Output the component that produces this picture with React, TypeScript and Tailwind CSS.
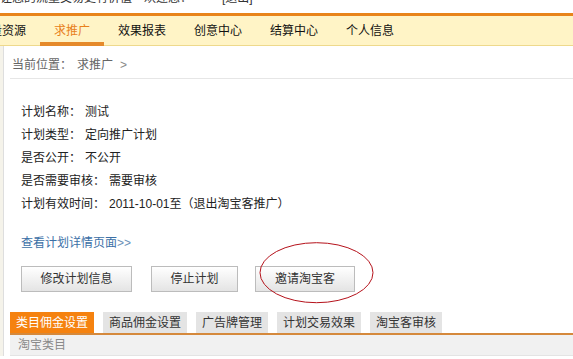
import React from 'react';

const navItems = ['流量资源', '求推广', '效果报表', '创意中心', '结算中心', '个人信息'];

const planInfo = [
  { label: '计划名称：', value: '测试' },
  { label: '计划类型：', value: '定向推广计划' },
  { label: '是否公开：', value: '不公开' },
  { label: '是否需要审核：', value: '需要审核' },
  { label: '计划有效时间：', value: '2011-10-01至（退出淘宝客推广）' },
];

const tabs = [
  { name: '类目佣金设置', active: true },
  { name: '商品佣金设置', active: false },
  { name: '广告牌管理', active: false },
  { name: '计划交易效果', active: false },
  { name: '淘宝客审核', active: false },
];

const App = () => {
  return (
    <div className="relative h-[359px] w-full overflow-hidden bg-white text-[12px] text-[#222] font-['Liberation_Sans','Noto_Sans_CJK_SC',sans-serif]">
      {/* top strip, cut off by the window */}
      <div className="h-[13px] overflow-hidden">
        <div className="-mt-[9px] whitespace-nowrap leading-[14px] text-[#333]">
          让您的流量交易更有价值　欢迎您：　　　[退出]
        </div>
      </div>

      {/* main nav */}
      <div className="flex h-[33px] border-t-[3px] border-b border-[#e8841a] border-b-[#eed98c] bg-[#fff4c6]">
        <div className="-ml-[36px] flex">
          {navItems.map((item) => {
            const active = item === '求推广';
            return (
              <div
                key={item}
                className={`relative flex h-[29px] items-center px-[14px] ${active ? 'text-[#e8801a]' : 'text-[#111]'}`}
              >
                {item}
                {active && <span className="absolute -bottom-px left-0 right-0 h-[4px] bg-[#e58a2b]" />}
              </div>
            );
          })}
        </div>
      </div>

      <div className="flex">
        <div className="w-[3px] bg-[#f5f3ea]" />
        <div className="flex-1 border-l border-[#dedede]">
          {/* breadcrumb */}
          <div className="ml-[6px] border-b border-[#e6e6e6] pb-[6px] pl-[2px] pt-[12px] leading-[14px] text-[#666]">
            当前位置：<span className="ml-[5px]">求推广</span>
            <span className="ml-[7px] text-[#888]">&gt;</span>
          </div>

          {/* plan info */}
          <div className="pl-[17px] pt-[22px]">
            {planInfo.map((row) => (
              <div key={row.label} className="leading-[23px]">
                {row.label}
                <span className="ml-[4px]">{row.value}</span>
              </div>
            ))}

            <div className="mt-[20px] leading-[14px] text-[#3b6fa6]">
              查看计划详情页面<span className="text-[#6a8fb8]">&gt;&gt;</span>
            </div>

            <div className="mt-[16px] flex">
              <button className="h-[26px] w-[111px] border border-[#bcbcbc] bg-gradient-to-b from-white to-[#e4e4e4] text-[#333]">
                修改计划信息
              </button>
              <button className="ml-[19px] h-[26px] w-[87px] border border-[#bcbcbc] bg-gradient-to-b from-white to-[#e4e4e4] text-[#333]">
                停止计划
              </button>
              <button className="ml-[17px] h-[26px] w-[100px] border border-[#bcbcbc] bg-gradient-to-b from-white to-[#e4e4e4] text-[#333]">
                邀请淘宝客
              </button>
            </div>
          </div>

          {/* tabs */}
          <div className="ml-[6px] mt-[20px]">
            <div className="flex gap-[9px] border-b-2 border-[#d5893c]">
              {tabs.map((tab) => (
                <div
                  key={tab.name}
                  className={`flex h-[21px] items-center px-[6px] ${tab.active ? 'bg-[#f5820f] text-white' : 'bg-[#e4e4e4] text-[#333]'}`}
                >
                  {tab.name}
                </div>
              ))}
            </div>
            <div className="h-[21px] border-b border-[#e4e4e4] bg-[#f1f1f1] pl-[8px] leading-[20px] text-[#8a8a8a]">
              淘宝类目
            </div>
          </div>
        </div>
      </div>

      {/* red annotation circle */}
      <svg className="absolute left-[258px] top-[241px]" width="118" height="64" viewBox="0 0 118 64">
        <ellipse cx="58.5" cy="31.7" rx="56.5" ry="30" fill="none" stroke="#b5121b" strokeWidth="1" />
      </svg>
    </div>
  );
};

export default App;
